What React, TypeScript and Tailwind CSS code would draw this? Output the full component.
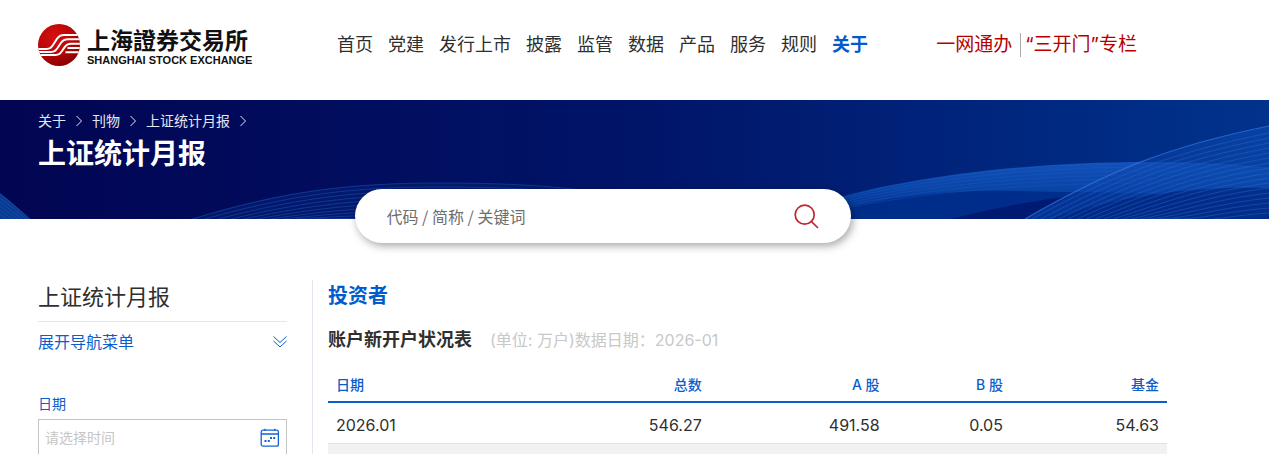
import React from 'react';

const navItems = [
  { label: '首页' },
  { label: '党建' },
  { label: '发行上市' },
  { label: '披露' },
  { label: '监管' },
  { label: '数据' },
  { label: '产品' },
  { label: '服务' },
  { label: '规则' },
  { label: '关于', active: true },
];

const crumbs = ['关于', '刊物', '上证统计月报'];

const columns = ['日期', '总数', 'A 股', 'B 股', '基金'];
const rows = [['2026.01', '546.27', '491.58', '0.05', '54.63']];

const range = (n: number) => Array.from({ length: n }, (_, i) => i);

const LogoMark: React.FC = () => (
  <svg viewBox="0 0 42 42" className="size-[42px] shrink-0" aria-hidden="true">
    <defs>
      <radialGradient id="mark" cx="0.38" cy="0.3" r="0.75">
        <stop offset="0" stopColor="#d80f0f" />
        <stop offset="0.55" stopColor="#b80707" />
        <stop offset="1" stopColor="#860000" />
      </radialGradient>
      <clipPath id="disc">
        <circle cx="21" cy="21" r="21" />
      </clipPath>
    </defs>
    <circle cx="21" cy="21" r="21" fill="url(#mark)" />
    <g fill="none" stroke="#fff" strokeWidth="2" clipPath="url(#disc)">
      <path d="M0 25H8.5C12 25 13 23.8 15 21L19 14.8C21 11.8 22.3 11 26 11H42" />
      <path d="M0 28H13C16.5 28 17.5 26.8 19.5 24L23 18.8C25 15.9 26.5 15.2 30 15.2H42" />
      <path d="M0 31H17.5C21 31 22 29.8 24 27L26.5 23.4C28.3 20.7 29.6 19.8 33 19.8H42" />
      <path d="M29.5 24H42M27.5 28.3H42" />
    </g>
  </svg>
);

const BannerWaves: React.FC = () => (
  <svg
    viewBox="0 0 1269 119"
    preserveAspectRatio="none"
    className="absolute inset-0 size-full"
    aria-hidden="true"
  >
    <defs>
      <linearGradient id="ribbon" x1="0" y1="0" x2="0" y2="1">
        <stop offset="0" stopColor="#1252ba" />
        <stop offset="0.5" stopColor="#0a45a8" />
        <stop offset="1" stopColor="#003090" />
      </linearGradient>
      <linearGradient id="fan" x1="0" y1="0" x2="1" y2="0">
        <stop offset="0" stopColor="#0b3fa6" stopOpacity="0.3" />
        <stop offset="1" stopColor="#0a48ab" stopOpacity="0.7" />
      </linearGradient>
    </defs>

    {/* bottom left corner */}
    <path d="M0 93Q14 104 30 119H0Z" fill="#083a93" />
    <g fill="none" stroke="#2a62bd" strokeWidth="0.8" opacity="0.6">
      {range(6).map((i) => (
        <path key={i} d={`M0 ${94 + i * 4}Q14 ${105 + i * 4} ${30 - i * 4} 119`} />
      ))}
    </g>

    {/* arcs rising behind the search box */}
    <path d="M192 119C280 90 350 83 440 83S560 88 620 95V119Z" fill="#06308c" opacity="0.35" />
    <g fill="none" stroke="#2458b5" strokeWidth="0.8" opacity="0.6">
      {range(10).map((i) => (
        <path
          key={i}
          d={`M${192 + i * 13} 119C${285 + i * 9} ${91 + i * 3} ${350 + i * 4} ${83 + i * 4} 440 ${83 + i * 4}S570 ${88 + i * 4} 620 ${95 + i * 4}`}
        />
      ))}
    </g>

    {/* wide ribbon on the right */}
    <path
      d="M820 103C900 78 1020 62 1150 62Q1210 62 1269 67V119H820Z"
      fill="#00308e"
      opacity="0.8"
    />
    <path
      d="M820 103C900 78 1020 62 1150 62Q1210 62 1269 67V100C1180 92 1090 93 1020 91C950 89 900 95 820 113Z"
      fill="url(#ribbon)"
    />
    <path d="M950 119Q1010 104 1070 96L1025 119Z" fill="#001a72" />
    <g fill="none" stroke="#2a68cd" strokeWidth="0.8" opacity="0.3">
      {range(6).map((i) => (
        <path
          key={i}
          d={`M820 ${104 + i * 2}C900 ${79 + i * 3} 1020 ${63 + i * 4} 1150 ${63 + i * 4}Q1210 ${63 + i * 4} 1269 ${68 + i * 4}`}
        />
      ))}
    </g>

    {/* fan crossing the ribbon */}
    <path d="M1025 119C1110 70 1170 46 1269 26V119Z" fill="url(#fan)" />
    <path d="M1050 119C1120 96 1190 86 1269 88V119Z" fill="#00237d" opacity="0.65" />
    <path d="M1025 119C1110 70 1170 46 1269 26" fill="none" stroke="#3575e0" strokeWidth="1.2" opacity="0.7" />
    <g fill="none" stroke="#3070d4" strokeWidth="0.8" opacity="0.5">
      {range(17).map((i) => (
        <path
          key={i}
          d={`M${1032 + i * 9} 119C${1112 + i * 6} ${75 + i * 3} ${1175 + i * 3} ${52 + i * 4} 1269 ${33 + i * 5}`}
        />
      ))}
    </g>
  </svg>
);

const CrumbArrow: React.FC = () => (
  <svg viewBox="0 0 6 12" className="h-3 w-1.5" fill="none" stroke="currentColor" aria-hidden="true">
    <path d="M0.5 1L5.5 6L0.5 11" />
  </svg>
);

const CalendarIcon: React.FC = () => (
  <svg viewBox="0 0 20 20" className="size-5" fill="none" stroke="#1463d0" strokeWidth="1.3" aria-hidden="true">
    <rect x="1.2" y="2.2" width="17.2" height="16" rx="2" />
    <path d="M1.2 6H18.4M5 0.8V3M14.8 0.8V3" />
    <g fill="#1463d0" stroke="none">
      <rect x="4.5" y="12" width="2" height="2" />
      <rect x="7.8" y="12" width="2" height="2" />
      <rect x="10" y="9" width="2" height="2" />
      <rect x="13.2" y="9" width="2" height="2" />
    </g>
  </svg>
);

export default function App() {
  return (
    <div className="bg-white font-['Inter','Noto_Sans_CJK_SC',sans-serif] text-[#2f2f2f]">
      <header className="flex items-center pt-6 pr-[102px] pb-[34px] pl-[38px] whitespace-nowrap">
        <a href="#" className="flex w-[299px] shrink-0 items-start gap-[7px] text-[#111111]">
          <LogoMark />
          <span className="flex flex-col">
            <span className="font-['Noto_Sans_CJK_TC',sans-serif] text-[23px] leading-[30px] font-bold">
              上海證券交易所
            </span>
            <span className="font-['Liberation_Sans',sans-serif] text-[11px] leading-3 font-bold">
              SHANGHAI STOCK EXCHANGE
            </span>
          </span>
        </a>
        <nav className="flex gap-[15px] text-lg">
          {navItems.map(({ label, active }) => (
            <a key={label} href="#" className={active ? 'font-bold text-[#005bcc]' : ''}>
              {label}
            </a>
          ))}
        </nav>
        <div className="ml-auto flex items-center pr-[30px] text-[19px] leading-6 text-[#b60000]">
          <a href="#" className="border-r border-[#a9a9a9] pr-2">一网通办</a>
          <a href="#" className="pl-1">“三开门”专栏</a>
        </div>
      </header>

      <section className="relative h-[119px] bg-linear-to-r from-[#020552] via-[#001468] to-[#00338d] pt-[11px] pl-[38px] text-white">
        <BannerWaves />
        <div className="relative">
          <ol className="flex items-center text-sm text-[#e4e8f4]">
            {crumbs.map((crumb) => (
              <li key={crumb} className="flex items-center gap-2.5 pr-2.5">
                <a href="#">{crumb}</a>
                <CrumbArrow />
              </li>
            ))}
          </ol>
          <h1 className="mt-[3px] text-[28px] leading-10 font-bold">上证统计月报</h1>
        </div>
      </section>

      <div className="pr-[102px] pl-[38px]">
        <form
          role="search"
          className="relative mx-auto -mt-[30px] flex h-[54px] max-w-[496px] items-center rounded-full bg-white px-8 shadow-[2px_3px_8px_rgba(0,0,0,0.35)]"
          onSubmit={(e) => e.preventDefault()}
        >
          <input
            type="text"
            aria-label="搜索"
            placeholder="代码 / 简称 / 关键词"
            className="min-w-0 flex-1 font-['Noto_Sans_CJK_SC',sans-serif] text-base outline-none placeholder:text-[#6d6d6d]"
          />
          <button type="submit" aria-label="搜索" className="text-[#c1272d]">
            <svg viewBox="0 0 25 25" className="size-[25px]" fill="none" stroke="currentColor" strokeWidth="1.7">
              <circle cx="10.7" cy="10.7" r="9.5" />
              <path d="M17.3 17.3L24 24" />
            </svg>
          </button>
        </form>

        <div className="flex pt-[37px]">
          <aside className="w-[275px] shrink-0 border-r border-[#e3e7ef] pr-[25px]">
            <h2 className="border-b border-[#e6e6e6] pt-px pb-2 text-[22px] leading-8">上证统计月报</h2>
            <button type="button" className="flex h-10 w-full items-center justify-between text-base text-[#0b5dcb]">
              展开导航菜单
              <svg viewBox="0 0 14 12" className="h-3 w-3.5" fill="none" stroke="currentColor" aria-hidden="true">
                <path d="M0.5 0.5L7 6.5L13.5 0.5M0.5 5L7 11L13.5 5" />
              </svg>
            </button>
            <label htmlFor="date" className="mt-8 block text-sm text-[#0b5dcb]">
              日期
            </label>
            <div className="mt-[5px] flex h-[38px] items-center border border-[#c4c4c4] px-1.5">
              <input
                id="date"
                type="text"
                placeholder="请选择时间"
                className="min-w-0 flex-1 text-sm outline-none placeholder:text-[#c6c6c6]"
              />
              <CalendarIcon />
            </div>
          </aside>

          <main className="min-w-0 flex-1 pl-[15px]">
            <h2 className="text-xl leading-8 font-bold text-[#005bcc]">投资者</h2>
            <div className="mt-3 flex items-center gap-[18px]">
              <h3 className="text-lg leading-8 font-bold">账户新开户状况表</h3>
              <p className="text-base text-[#c8c8c8]">(单位: 万户)数据日期：2026-01</p>
            </div>
            <table className="mt-3 w-full table-fixed border-collapse text-right">
              <colgroup>
                <col className="w-[24%]" />
                <col className="w-[21.5%]" />
                <col className="w-[21.2%]" />
                <col className="w-[14.7%]" />
                <col className="w-[18.6%]" />
              </colgroup>
              <thead>
                <tr className="h-[34px] border-b-2 border-[#0b5dcb] text-sm text-[#0b5dcb]">
                  {columns.map((column) => (
                    <th key={column} className="px-2 font-medium first:text-left">
                      {column}
                    </th>
                  ))}
                </tr>
              </thead>
              <tbody>
                {rows.map((row) => (
                  <tr key={row[0]} className="h-[41px] border-b border-[#e2e2e2] text-base">
                    {row.map((cell, i) => (
                      <td key={columns[i]} className="px-2 pt-1 first:text-left">
                        {cell}
                      </td>
                    ))}
                  </tr>
                ))}
                <tr className="h-[41px] bg-[#f3f2f1]">
                  <td colSpan={5} />
                </tr>
              </tbody>
            </table>
          </main>
        </div>
      </div>
    </div>
  );
}
